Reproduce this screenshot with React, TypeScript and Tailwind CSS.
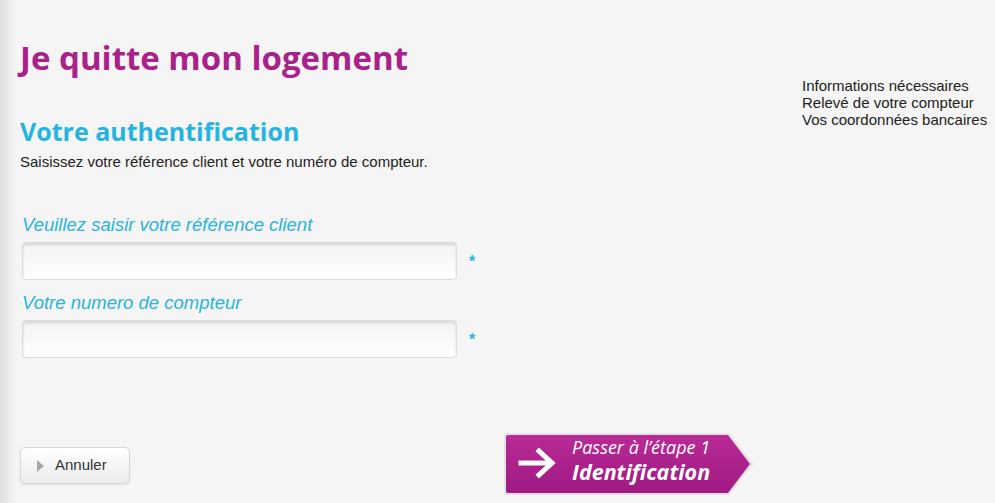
import React from "react"

const field = (label: string) => (
  <div>
    <div className="text-[18.5px] italic leading-[22px] text-[#29b3df]">{label}</div>
    <div className="mt-[6px] flex items-center">
      <input
        type="text"
        className="h-[38px] w-[435px] rounded-[4px] border border-[#dcdcdc] bg-gradient-to-b from-[#f3f3f3] to-white shadow-[inset_0_2px_3px_rgba(0,0,0,0.12)] outline-none"
      />
      <span className="ml-[12px] mt-[2px] text-[16px] font-bold text-[#29b3df]">*</span>
    </div>
  </div>
)

export default function App() {
  return (
    <div className="relative h-[503px] w-[995px] overflow-hidden bg-[#f5f5f5] font-['Liberation_Sans',Arial,sans-serif] text-[#222]">
      <div className="absolute inset-y-0 left-0 w-[16px] bg-gradient-to-r from-[#dedede] to-[#f5f5f5]" />
      <div className="relative flex">
        <div className="w-[780px] pl-[20px]">
          <h1 className="mt-[38px] font-['Open_Sans',sans-serif] text-[33px] font-bold leading-[40px] text-[#a9218a]">
            Je quitte mon logement
          </h1>
          <h2 className="mt-[38px] font-['Open_Sans',sans-serif] text-[25px] font-bold leading-[30px] text-[#27b3e0]">
            Votre authentification
          </h2>
          <p className="mt-[7px] text-[15px] leading-[18px] text-[#222]">
            Saisissez votre référence client et votre numéro de compteur.
          </p>
          <div className="mt-[43px] pl-[2px] space-y-[12px]">
            {field("Veuillez saisir votre référence client")}
            {field("Votre numero de compteur")}
          </div>
          <div className="mt-[74px] flex items-start">
            <button className="mt-[15px] flex h-[37px] w-[110px] items-center rounded-[5px] border border-[#d6d6d6] bg-gradient-to-b from-white to-[#ececec] pl-[16px] text-[15px] text-[#333] shadow-[0_1px_2px_rgba(0,0,0,0.08)]">
              <span className="mr-[11px] h-0 w-0 border-y-[6px] border-l-[7px] border-y-transparent border-l-[#a8a8a8]" />
              Annuler
            </button>
            <button className="relative ml-[373px] h-[64px] w-[251px]">
              <svg className="absolute inset-0" width="251" height="64" viewBox="0 0 251 64">
                <defs>
                  <linearGradient id="mg" x1="0" y1="0" x2="0" y2="1">
                    <stop offset="0" stopColor="#b82a95" />
                    <stop offset="1" stopColor="#a01a84" />
                  </linearGradient>
                </defs>
                <path d="M4 1 H226 L250 32 L226 63 H4 Q1 63 1 60 V4 Q1 1 4 1 Z" fill="#e6e0e4" />
                <path d="M5 3 H225 L247 32 L225 61 H5 Q3 61 3 59 V5 Q3 3 5 3 Z" fill="url(#mg)" />
                <path d="M18 31 H48 M36 19 L49 31 L36 43" stroke="#fff" strokeWidth="5" fill="none" strokeLinecap="square" />
              </svg>
              <div className="relative flex h-full flex-col items-start pl-[69px] pt-[4px] font-['Open_Sans',sans-serif] italic text-white">
                <span className="text-[18px] leading-[22px]">Passer à l’étape 1</span>
                <span className="text-[21.5px] font-bold leading-[27px]">Identification</span>
              </div>
            </button>
          </div>
        </div>
        <div className="pt-[77px] pl-[22px] text-[15px] leading-[17px] text-[#222]">
          <div>Informations nécessaires</div>
          <div>Relevé de votre compteur</div>
          <div>Vos coordonnées bancaires</div>
        </div>
      </div>
    </div>
  )
}
